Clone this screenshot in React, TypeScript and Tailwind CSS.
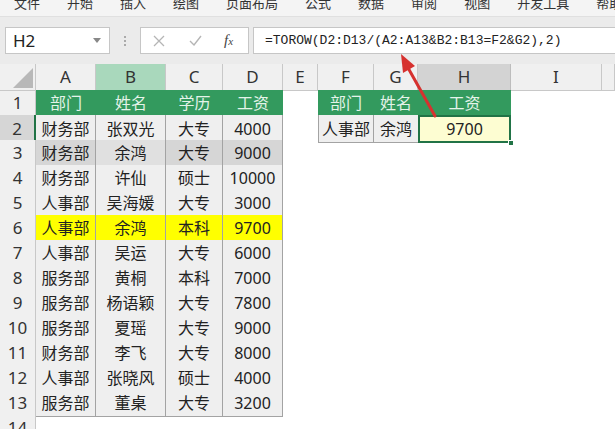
import React from "react";

const COLS =
  "grid grid-cols-[36px_60px_70px_57px_60px_35px_56px_44px_93px_91px_1fr]";

const tabs = ["文件", "开始", "插入", "绘图", "页面布局", "公式", "数据", "审阅", "视图", "开发工具", "帮助"];

const letters = ["A", "B", "C", "D", "E", "F", "G", "H", "I", ""];

const data = [
  ["财务部", "张双光", "大专", "4000"],
  ["财务部", "余鸿", "大专", "9000"],
  ["财务部", "许仙", "硕士", "10000"],
  ["人事部", "吴海媛", "大专", "3000"],
  ["人事部", "余鸿", "本科", "9700"],
  ["人事部", "吴运", "大专", "6000"],
  ["服务部", "黄桐", "本科", "7000"],
  ["服务部", "杨语颖", "大专", "7800"],
  ["服务部", "夏瑶", "大专", "9000"],
  ["财务部", "李飞", "大专", "8000"],
  ["人事部", "张晓风", "硕士", "4000"],
  ["服务部", "董桌", "大专", "3200"],
];

function colHeaderClass(i: number) {
  if (i === 1) return "bg-[#a9d8bc] border-r border-b border-[#c8c8c8]";
  if (i === 7) return "bg-[#d3d3d3] border-r border-b border-[#bdbdbd]";
  return "bg-[#f0f0f0] border-r border-b border-[#c8c8c8]";
}

function Cell({ cls, children }: { cls: string; children?: React.ReactNode }) {
  return <div className={"flex items-center justify-center " + cls}>{children}</div>;
}

function tableCellClass(row: number, col: number) {
  // row: 2..13 data rows, col 0..3
  if (row === 6) return "bg-[#ffff00] border-r border-b border-[#a3a3a3]";
  if (row === 3)
    return col === 1
      ? "bg-[#e0e0e0] border-r border-b border-[#a3a3a3]"
      : "bg-[#d6d6d6] border-r border-b border-[#a3a3a3]";
  return "bg-[#efefef] border-r border-b border-[#a3a3a3]";
}

export default function App() {
  return (
    <div
      className="relative w-[615px] h-[429px] overflow-hidden bg-white text-[#222]"
      style={{ fontFamily: '"Noto Sans", "Noto Sans CJK SC", sans-serif' }}
    >
      {/* ribbon tabs (cut off at top, as in the screenshot) */}
      <div className="h-[16px] bg-[#f4f4f4] overflow-hidden flex gap-[27px] pl-[14px] text-[13px] leading-[13px] text-[#333]">
        {tabs.map((t) => (
          <span key={t} className="-mt-[3px] whitespace-nowrap">
            {t}
          </span>
        ))}
      </div>

      {/* formula bar */}
      <div className="h-[48px] bg-[#ebebeb] border-t border-[#e0e0e0] pt-[10px] flex items-start">
        <div className="ml-[5px] w-[105px] h-[27px] bg-white border border-[#c6c6c6] flex items-center pl-[7px] pr-[8px]">
          <span className="text-[17px] text-[#222] flex-1">H2</span>
          <svg width="8" height="5" viewBox="0 0 8 5">
            <path d="M0 0 L8 0 L4 5 Z" fill="#888" />
          </svg>
        </div>
        <div className="w-[30px] h-[27px] flex flex-col items-center justify-center gap-[2px]">
          <span className="w-[2px] h-[2px] bg-[#aaa]" />
          <span className="w-[2px] h-[2px] bg-[#aaa]" />
          <span className="w-[2px] h-[2px] bg-[#aaa]" />
        </div>
        <div className="w-[109px] h-[27px] bg-white border border-[#c6c6c6] flex items-center pl-[12px]">
          <svg width="12" height="12" viewBox="0 0 12 12">
            <path d="M1 1 L11 11 M11 1 L1 11" stroke="#b5b5b5" strokeWidth="1.3" />
          </svg>
          <svg width="13" height="11" viewBox="0 0 13 11" className="ml-[24px]">
            <path d="M1 6 L5 10 L12 1" stroke="#b5b5b5" strokeWidth="1.4" fill="none" />
          </svg>
          <span
            className="ml-[22px] text-[15px] italic text-[#444]"
            style={{ fontFamily: '"Liberation Serif", serif' }}
          >
            f<span className="text-[11px]">x</span>
          </span>
        </div>
        <div className="ml-[4px] flex-1 h-[27px] bg-white border border-r-0 border-[#c6c6c6] flex items-center pl-[11px]">
          <span
            className="text-[13px] text-[#222] whitespace-nowrap"
            style={{ fontFamily: '"Liberation Mono", monospace' }}
          >
            =TOROW(D2:D13/(A2:A13&amp;B2:B13=F2&amp;G2),2)
          </span>
        </div>
      </div>

      {/* column headers */}
      <div className={COLS + " h-[26px] text-[17px] text-[#333]"}>
        <div className="relative bg-[#f0f0f0] border-r border-b border-[#c8c8c8]">
          <svg className="absolute right-[2px] bottom-[2px]" width="20" height="20" viewBox="0 0 20 20">
            <path d="M20 0 L20 20 L0 20 Z" fill="#b8b8b8" />
          </svg>
        </div>
        {letters.map((l, i) => (
          <Cell key={i} cls={colHeaderClass(i)}>
            {l}
          </Cell>
        ))}
      </div>

      {/* row 1 */}
      <div className={COLS + " h-[25px] text-[16px]"}>
        <Cell cls="bg-[#f0f0f0] border-r border-b border-[#c8c8c8] text-[17px] text-[#333]">1</Cell>
        {["部门", "姓名", "学历", "工资"].map((h) => (
          <Cell key={h} cls="bg-[#339a5e] text-[#e4f3e9] border-b border-[#a3a3a3]">
            {h}
          </Cell>
        ))}
        <div />
        {["部门", "姓名", "工资"].map((h) => (
          <Cell key={h} cls="bg-[#339a5e] text-[#e4f3e9]">
            {h}
          </Cell>
        ))}
        <div />
        <div />
      </div>

      {/* rows 2..13 */}
      {data.map((r, idx) => {
        const row = idx + 2;
        return (
          <div key={row} className={COLS + " h-[25px] text-[16px]"}>
            {row === 2 ? (
              <Cell cls="bg-[#d6d6d6] border-r-2 border-b border-r-[#217346] border-b-[#c8c8c8] text-[17px] text-[#333]">
                {row}
              </Cell>
            ) : (
              <Cell cls="bg-[#f0f0f0] border-r border-b border-[#c8c8c8] text-[17px] text-[#333]">
                {row}
              </Cell>
            )}
            {r.map((v, c) => (
              <Cell key={c} cls={tableCellClass(row, c)}>
                {v}
              </Cell>
            ))}
            <div />
            {row === 2 ? (
              <>
                <Cell cls="bg-[#efefef] border-l border-r border-b border-[#a3a3a3]">人事部</Cell>
                <Cell cls="bg-[#efefef] border-b border-[#a3a3a3]">余鸿</Cell>
                <div className="relative">
                  <Cell cls="h-full bg-[#fdfdd2] border-2 border-[#217346]">9700</Cell>
                  <span className="absolute -right-[3px] -bottom-[3px] w-[6px] h-[6px] bg-[#217346] border border-white" />
                </div>
              </>
            ) : (
              <>
                <div />
                <div />
                <div />
              </>
            )}
            <div />
            <div />
          </div>
        );
      })}

      {/* row 14 */}
      <div className={COLS + " h-[25px]"}>
        <Cell cls="bg-[#f0f0f0] border-r border-[#c8c8c8] text-[17px] text-[#333]">14</Cell>
      </div>

      {/* red arrow */}
      <svg className="absolute left-0 top-0 pointer-events-none" width="615" height="429">
        <line x1="435" y1="116" x2="407" y2="66" stroke="#d6312f" strokeWidth="3" strokeLinecap="round" />
        <path d="M401 54 L415 66 L403 73 Z" fill="#d6312f" />
      </svg>
    </div>
  );
}
